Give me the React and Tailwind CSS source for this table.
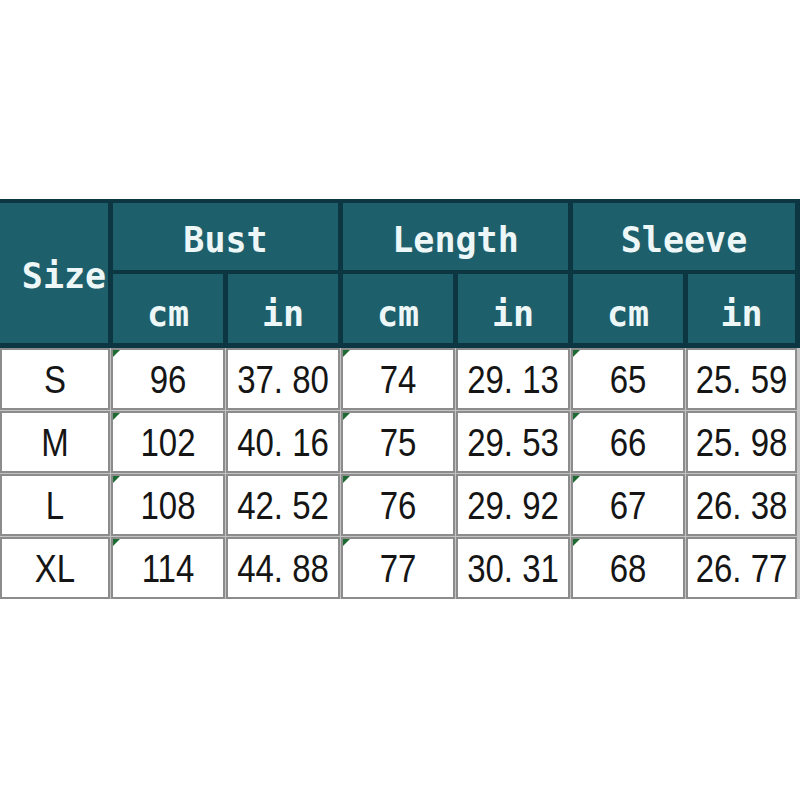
import React from "react";

const rows = [
  ["S", "96", "37. 80", "74", "29. 13", "65", "25. 59"],
  ["M", "102", "40. 16", "75", "29. 53", "66", "25. 98"],
  ["L", "108", "42. 52", "76", "29. 92", "67", "26. 38"],
  ["XL", "114", "44. 88", "77", "30. 31", "68", "26. 77"],
];

const mono = { fontFamily: '"DejaVu Sans Mono", monospace' };
const sans = { fontFamily: '"Liberation Sans", Arial, sans-serif' };

function HeadCell({ children, className = "" }) {
  return (
    <div
      className={`bg-[#1e5f6c] text-[#eef7f7] font-bold text-[35px] leading-none flex items-center justify-center ${className}`}
      style={mono}
    >
      {children}
    </div>
  );
}

export default function App() {
  return (
    <div className="w-[800px] h-[800px] bg-white pt-[199px]">
      <div className="bg-[#0c3641] pt-[4px] pb-[5px] pr-[5px] grid grid-cols-[108px_110px_110px_110px_110px_110px_107px] grid-rows-[67px_69px] gap-x-[5px] gap-y-[4px]">
        <HeadCell className="row-span-2 pl-[20px] pt-[6px]">Size</HeadCell>
        <HeadCell className="col-span-2 pt-[7px]">Bust</HeadCell>
        <HeadCell className="col-span-2 pt-[7px]">Length</HeadCell>
        <HeadCell className="col-span-2 pt-[7px]">Sleeve</HeadCell>
        <HeadCell className="pt-[12px]">cm</HeadCell>
        <HeadCell className="pt-[12px]">in</HeadCell>
        <HeadCell className="pt-[12px]">cm</HeadCell>
        <HeadCell className="pt-[12px]">in</HeadCell>
        <HeadCell className="pt-[12px]">cm</HeadCell>
        <HeadCell className="pt-[12px]">in</HeadCell>
      </div>
      <div className="bg-[#c4c4c4] pr-[3px] grid grid-cols-[110px_114px_114px_114px_114px_114px_111px] auto-rows-[62px] gap-[1px]">
        {rows.map((r, ri) =>
          r.map((v, ci) => (
            <div
              key={`${ri}-${ci}`}
              className="relative bg-white border-2 border-[#8c8c8c] flex items-center justify-center text-[#151515] text-[33px] leading-none"
              style={sans}
            >
              {(ci === 1 || ci === 3 || ci === 5) && (
                <span className="absolute top-0 left-0 w-0 h-0 border-t-[7px] border-r-[7px] border-t-[#1e6a33] border-r-transparent" />
              )}
              <span className="inline-block scale-y-[1.18] whitespace-pre">{v}</span>
            </div>
          ))
        )}
      </div>
    </div>
  );
}
